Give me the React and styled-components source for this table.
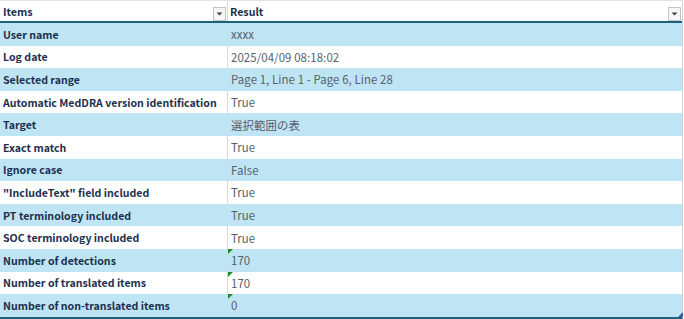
import styled, { createGlobalStyle } from "styled-components";

const GlobalStyle = createGlobalStyle`
  html, body {
    margin: 0;
    padding: 0;
    background: #ffffff;
  }
  body {
    font-family: "Noto Sans CJK JP", "Noto Sans", sans-serif;
  }
`;

const Sheet = styled.div`
  width: 684px;
  height: 319px;
  overflow: hidden;
  background: #ffffff;
  position: relative;
`;

const Table = styled.div`
  width: 683px;
  border-right: 1px solid #d4d4d4;
  border-bottom: 2px solid #1d5f7c;
  box-sizing: border-box;
`;

const HeaderRow = styled.div`
  display: grid;
  grid-template-columns: 227px 1fr;
  height: 23px;
  box-sizing: border-box;
  border-bottom: 2px solid #1d5f7c;
  border-top: 1px solid #e4e4e4;
`;

const HeaderCell = styled.div`
  display: flex;
  align-items: center;
  justify-content: space-between;
  padding: 0 1px 0 3px;
  font-weight: 700;
  font-size: 10.7px;
  color: #1c2f4f;
  border-left: ${(p) => (p.$divided ? "1px solid #d9d9d9" : "none")};
  padding-left: ${(p) => (p.$divided ? "2px" : "3px")};
`;

const FilterButton = styled.span`
  width: 13px;
  height: 14px;
  margin-top: 5px;
  box-sizing: border-box;
  border: 1px solid #c4c4c4;
  background: #f6f6f6;
  display: flex;
  align-items: center;
  justify-content: center;
`;

const Row = styled.div`
  display: grid;
  grid-template-columns: 227px 1fr;
  height: 22.6px;
  background: ${(p) => (p.$striped ? "#bfe4f4" : "#ffffff")};
`;

const Label = styled.div`
  display: flex;
  align-items: center;
  padding-left: 3px;
  font-weight: 700;
  font-size: 10.6px;
  color: #1c2f4f;
  white-space: nowrap;
`;

const Value = styled.div`
  position: relative;
  display: flex;
  align-items: center;
  padding-left: 3px;
  font-size: 11.4px;
  letter-spacing: 0.1px;
  color: #55616d;
  white-space: nowrap;
  border-left: 1px solid ${(p) => (p.$striped ? "#bfe4f4" : "#d9d9d9")};
`;

const ErrorMark = styled.span`
  position: absolute;
  left: 0;
  top: 0;
  width: 0;
  height: 0;
  border-top: 5px solid #1f8a28;
  border-right: 5px solid transparent;
`;

const ResizeHandle = styled.span`
  position: absolute;
  right: 1px;
  bottom: 2px;
  width: 0;
  height: 0;
  border-bottom: 5px solid #3b5ba8;
  border-left: 5px solid transparent;
`;

const Arrow = () => (
  <svg width="7" height="4" viewBox="0 0 7 4">
    <path d="M0.5 0.5 L6.5 0.5 L3.5 3.5 Z" fill="#444" />
  </svg>
);

const rows = [
  ["User name", "xxxx"],
  ["Log date", "2025/04/09 08:18:02"],
  ["Selected range", "Page 1, Line 1 - Page 6, Line 28"],
  ["Automatic MedDRA version identification", "True"],
  ["Target", "選択範囲の表"],
  ["Exact match", "True"],
  ["Ignore case", "False"],
  ['"IncludeText" field included', "True"],
  ["PT terminology included", "True"],
  ["SOC terminology included", "True"],
  ["Number of detections", "170", true],
  ["Number of translated items", "170", true],
  ["Number of non-translated items", "0", true],
];

export default function App() {
  return (
    <Sheet>
      <GlobalStyle />
      <Table>
        <HeaderRow>
          <HeaderCell>
            Items
            <FilterButton>
              <Arrow />
            </FilterButton>
          </HeaderCell>
          <HeaderCell $divided>
            Result
            <FilterButton>
              <Arrow />
            </FilterButton>
          </HeaderCell>
        </HeaderRow>
        {rows.map(([label, value, flagged], i) => (
          <Row key={label} $striped={i % 2 === 0}>
            <Label>{label}</Label>
            <Value $striped={i % 2 === 0}>
              {flagged && <ErrorMark />}
              {value}
            </Value>
          </Row>
        ))}
      </Table>
      <ResizeHandle />
    </Sheet>
  );
}
